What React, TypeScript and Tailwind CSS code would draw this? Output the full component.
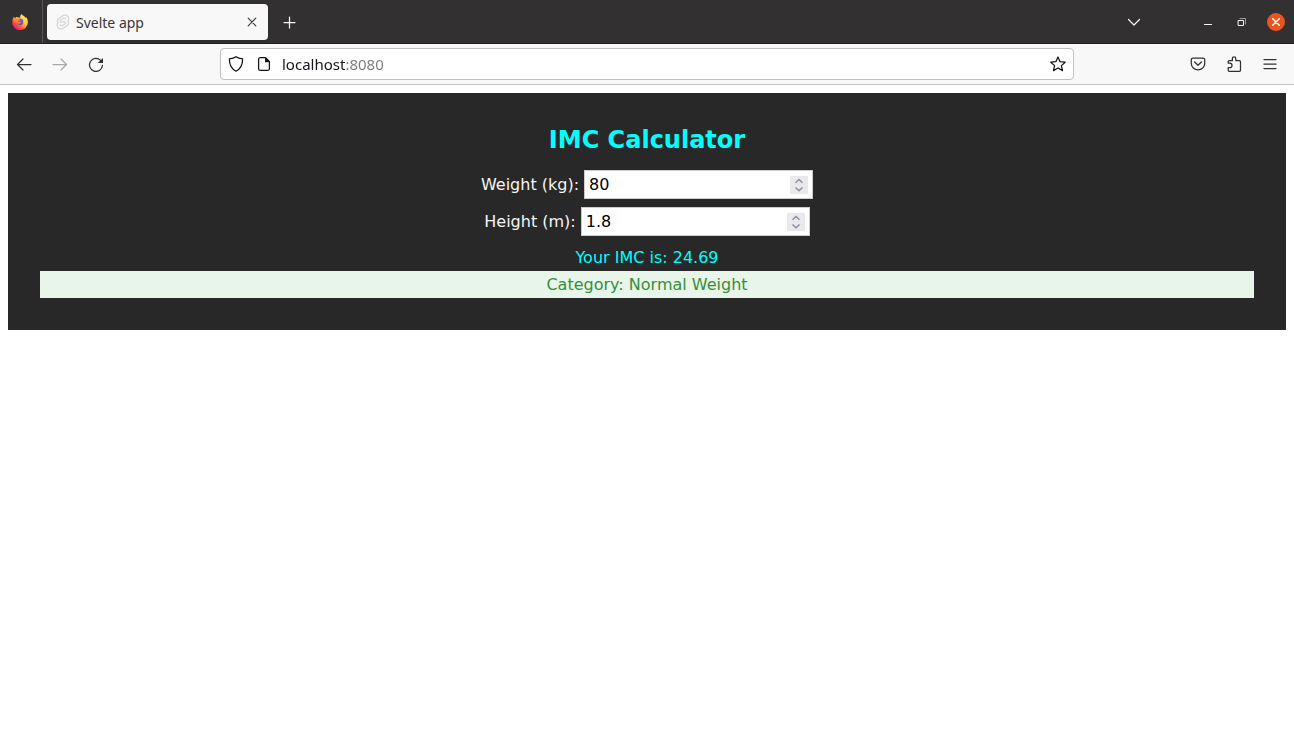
import { useState } from "react";
import type { ReactNode } from "react";

function Icon({ children, className = "" }: { children: ReactNode; className?: string }) {
  return (
    <svg
      viewBox="0 0 16 16"
      className={`size-4 shrink-0 ${className}`}
      fill="none"
      stroke="currentColor"
      strokeWidth="1.25"
      strokeLinecap="round"
      strokeLinejoin="round"
      aria-hidden="true"
    >
      {children}
    </svg>
  );
}

function FirefoxLogo() {
  return (
    <svg viewBox="0 0 16 16" className="size-4" aria-hidden="true">
      <defs>
        <linearGradient id="flame" x1="0.85" y1="0.1" x2="0.2" y2="0.95">
          <stop offset="0" stopColor="#fff44f" />
          <stop offset="0.35" stopColor="#ffcd35" />
          <stop offset="0.6" stopColor="#ff7f30" />
          <stop offset="0.8" stopColor="#ff3750" />
          <stop offset="1" stopColor="#e31587" />
        </linearGradient>
        <radialGradient id="globe" cx="0.5" cy="0.3" r="0.7">
          <stop offset="0" stopColor="#9059ff" />
          <stop offset="1" stopColor="#5b3fd0" />
        </radialGradient>
      </defs>
      <path
        d="M9.500 0c-1.300 1.700-1.500 2.900-1.300 3.800C7 3.300 5 3.500 4.300 2.700c0 0-.6.800-.5 1.400C3 3.900 2.300 3.400 2 2.700 1 4 .2 6 .2 8.300a7.800 7.800 0 0 0 15.600.100c.1-2.300-.6-4.300-1.800-5.400.1.500.1.800 0 1.200C13 2.300 10.800 1.800 9.500 0z"
        fill="url(#flame)"
      />
      <circle cx="8.100" cy="7.800" r="3.200" fill="url(#globe)" />
      <path
        d="M2.200 5c1.300-.8 2.600-.6 3.400 0 .9-.1 2 .1 2.400.8-.2.900-1.600.8-1.800 1.500-.1.600.5 1 1.200 1 .9 0 1.400-.5 2.100-.2-.6 1.300-2.300 2-3.900 1.400C3.800 9 2.700 7 2.200 5z"
        fill="#ff8a20"
      />
    </svg>
  );
}

function SvelteLogo() {
  return (
    <svg
      viewBox="0 0 16 16"
      className="size-4 shrink-0"
      fill="none"
      stroke="#d9d9d9"
      strokeWidth="1.4"
      strokeLinecap="round"
      strokeLinejoin="round"
      aria-hidden="true"
    >
      <path d="M12.900 7.500c1.200-1.700.9-4.200-.5-5.500-1.200-1.100-3-1.100-4.300-.3L4.300 4.100C2.600 5.200 2.100 7 3.100 8.700c-1.200 1.700-.9 4 .5 5.300 1.200 1.100 3 1.100 4.300.3l3.800-2.400c1.700-1.100 2.200-2.800 1.200-4.400z" />
      <path d="M10.500 4.900c-.4-.8-1.300-1-2-.6L5.900 6c-1 .7-.7 2.100.5 2.200.9.100 1.400-.5 2.200-.6 1.600-.2 2.200 1.600 1.100 2.400l-2.400 1.600c-.8.500-1.700.2-2-.6" />
    </svg>
  );
}

function TitleBar() {
  return (
    <header className="flex h-11 items-center border-b border-[#1f1d1e] bg-[#333031] text-[#f5f5f5]">
      <div className="flex w-[43px] items-center self-stretch border-r border-[#575556] pl-3">
        <FirefoxLogo />
      </div>
      <div className="ml-1 flex h-9 w-[221px] items-center rounded bg-[#f8f8f8] pr-2 pl-2 text-[#38353a] shadow">
        <SvelteLogo />
        <span className="ml-[5px] flex-1 pt-0.5 font-['Noto_Sans',sans-serif] text-sm">Svelte app</span>
        <button type="button" aria-label="Close tab" className="flex size-4 items-center justify-center">
          <Icon>
            <path d="M4.200 4.200l7.600 7.600M11.800 4.200l-7.600 7.600" strokeWidth="1.100" />
          </Icon>
        </button>
      </div>
      <button type="button" aria-label="New tab" className="ml-[6px] flex size-8 items-center justify-center">
        <Icon>
          <path d="M7.500 3v11M2 8.500h11" />
        </Icon>
      </button>
      <button type="button" aria-label="List all tabs" className="ml-auto flex size-8 items-center justify-center">
        <Icon>
          <path d="M3.500 5.500L9 11l5.500-5.500" />
        </Icon>
      </button>
      <div className="ml-[50px] flex items-center gap-[18px] pr-[9px]">
        <button type="button" aria-label="Minimize" className="flex size-4 items-center justify-center">
          <Icon>
            <path d="M5 10.500h8" strokeWidth="1" strokeLinecap="butt" />
          </Icon>
        </button>
        <button type="button" aria-label="Restore" className="flex size-4 items-center justify-center">
          <Icon>
            <path d="M7 4.500h5.500V10" strokeWidth="1" strokeLinejoin="miter" opacity="0.55" />
            <path d="M5.500 6.500h5v5h-5z" strokeWidth="1" strokeLinejoin="miter" />
          </Icon>
        </button>
        <button
          type="button"
          aria-label="Close window"
          className="flex size-[18px] items-center justify-center rounded-full bg-[#e95420] text-white"
        >
          <Icon>
            <path d="M4.700 4.700l6.600 6.600M11.300 4.700l-6.600 6.600" strokeWidth="1.500" />
          </Icon>
        </button>
      </div>
    </header>
  );
}

function ToolButton({ label, disabled, children }: { label: string; disabled?: boolean; children: ReactNode }) {
  return (
    <button
      type="button"
      aria-label={label}
      disabled={disabled}
      className="flex size-8 items-center justify-center rounded disabled:opacity-40"
    >
      <Icon>{children}</Icon>
    </button>
  );
}

function Toolbar() {
  const [url, setUrl] = useState("localhost:8080");
  return (
    <nav className="flex h-[41px] items-center border-b border-[#c4c4c4] bg-[#f8f8f8] px-2 text-[#333035]">
      <div className="flex gap-1">
        <ToolButton label="Back">
          <path d="M15 8.500H1.500M7 3L1.500 8.500 7 14" />
        </ToolButton>
        <ToolButton label="Forward" disabled>
          <path d="M1 8.500h13.500M9 3l5.500 5.500L9 14" />
        </ToolButton>
        <ToolButton label="Reload">
          <path d="M14.500 9.300A6.500 6.500 0 1 1 12.700 4.400" />
          <path d="M15 2v5H9.800z" fill="currentColor" stroke="none" />
        </ToolButton>
      </div>
      <div className="mx-[108px] flex h-8 flex-1 items-center rounded border border-[#bfbfbf] bg-white px-[7px] text-[#15141a]">
        <Icon>
          <path d="M8 .7c1.800 1.300 4 1.900 6.600 2.200.1 5.800-1.900 10-6.600 12.300C3.300 12.900 1.300 8.700 1.400 2.900 4 2.600 6.200 2 8 .7z" />
        </Icon>
        <Icon className="ml-3">
          <path d="M9.500 1.600H4.200A1.600 1.600 0 0 0 2.600 3.200v9.600a1.600 1.600 0 0 0 1.600 1.600h7.600a1.600 1.600 0 0 0 1.600-1.600V5.500z" />
          <path d="M9 1.500v4.700h4.600V5.400L9.700 1.500z" fill="currentColor" stroke="none" />
        </Icon>
        <input
          type="text"
          aria-label="Address"
          value={url}
          onChange={(event) => setUrl(event.target.value)}
          className="ml-[10px] min-w-0 flex-1 bg-[linear-gradient(to_right,#15141a_63px,#7c7b80_63px)] bg-clip-text pt-px font-['Noto_Sans',sans-serif] text-[15px] text-transparent caret-black outline-none"
        />
        <button type="button" aria-label="Bookmark this page">
          <Icon>
            <path d="M8 1l2.100 4.700 5.100.5-3.800 3.400 1.100 5L8 12l-4.500 2.600 1.100-5L.8 6.200l5.100-.5z" />
          </Icon>
        </button>
      </div>
      <div className="flex gap-1">
        <ToolButton label="Save to Pocket">
          <path d="M3 2h10a1.700 1.700 0 0 1 1.700 1.700V7.500a6.700 6.300 0 0 1-13.400 0V3.700A1.700 1.700 0 0 1 3 2z" />
          <path d="M4.600 6L8 9.300 11.400 6" />
        </ToolButton>
        <ToolButton label="Extensions">
          <path d="M2.200 7.200V5.700a1 1 0 0 1 1-1h3.200V2.500a1.700 1.700 0 0 1 3.400 0v2.200h3.700a1 1 0 0 1 1 1v8.600a1 1 0 0 1-1 1H3.200a1 1 0 0 1-1-1V11.600h1.600a2 2 0 0 0 0-4.400z" />
        </ToolButton>
        <ToolButton label="Open application menu">
          <path d="M2 3.500h12M2 8h12M2 12.500h12" />
        </ToolButton>
      </div>
    </nav>
  );
}

interface NumberFieldProps {
  id: string;
  label: string;
  step: number;
  value: string;
  onChange: (value: string) => void;
}

function NumberField({ id, label, step, value, onChange }: NumberFieldProps) {
  const bump = (direction: number) =>
    onChange(String(Number((Number(value) + direction * step).toFixed(2))));

  return (
    <div className="flex items-center justify-center gap-[5px]">
      <label htmlFor={id}>{label}</label>
      <div className="flex h-[29px] w-[229px] items-center border border-[#ccc] bg-white px-1 text-black">
        <input
          id={id}
          type="number"
          step={step}
          value={value}
          onChange={(event) => onChange(event.target.value)}
          className="min-w-0 flex-1 [appearance:textfield] outline-none [&::-webkit-inner-spin-button]:appearance-none"
        />
        <div className="flex h-[18px] w-[18px] flex-col bg-[#e9e9ed] text-[#8f8f9d]">
          <button type="button" aria-label={`Increase ${label}`} onClick={() => bump(1)} className="h-[9px]">
            <svg viewBox="0 0 18 9" className="block h-[9px] w-[18px]" fill="none" stroke="currentColor" strokeWidth="1.500">
              <path d="M5.500 6.800L9 3.500l3.500 3.300" />
            </svg>
          </button>
          <button type="button" aria-label={`Decrease ${label}`} onClick={() => bump(-1)} className="h-[9px]">
            <svg viewBox="0 0 18 9" className="block h-[9px] w-[18px]" fill="none" stroke="currentColor" strokeWidth="1.500">
              <path d="M5.500 2.500L9 5.800l3.500-3.300" />
            </svg>
          </button>
        </div>
      </div>
    </div>
  );
}

function categoryFor(imc: number) {
  if (imc < 18.5) return "Underweight";
  if (imc < 25) return "Normal Weight";
  if (imc < 30) return "Overweight";
  return "Obese";
}

function Calculator() {
  const [weight, setWeight] = useState("80");
  const [height, setHeight] = useState("1.8");
  const imc = Number(weight) / Number(height) ** 2;

  return (
    <main className="m-2 bg-[#282828] p-8 text-center font-['DejaVu_Sans',sans-serif] text-base leading-[19px] text-[#f5f5f5]">
      <h1 className="text-2xl leading-[30px] font-bold text-[#00ffff]">IMC Calculator</h1>
      <form className="mt-[15px] flex flex-col gap-2" onSubmit={(event) => event.preventDefault()}>
        <NumberField id="weight" label="Weight (kg):" step={1} value={weight} onChange={setWeight} />
        <NumberField id="height" label="Height (m):" step={0.1} value={height} onChange={setHeight} />
      </form>
      <p className="mt-3 text-[#00ffff]">Your IMC is: {imc.toFixed(2)}</p>
      <p className="mt-1 bg-[#e8f5e9] p-1 text-[#388e3c]">Category: {categoryFor(imc)}</p>
    </main>
  );
}

export default function App() {
  return (
    <div className="min-h-screen bg-white">
      <TitleBar />
      <Toolbar />
      <Calculator />
    </div>
  );
}
